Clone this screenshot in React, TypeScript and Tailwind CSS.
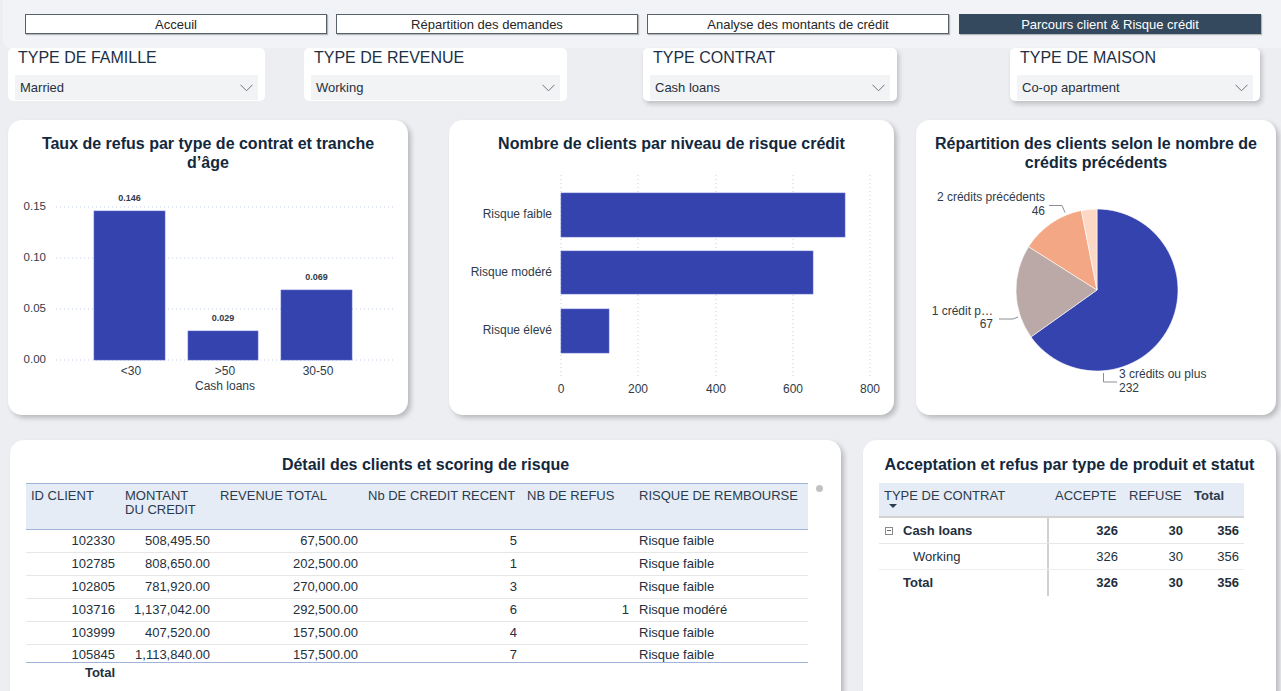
import React from "react";

const navItems = [
  { label: "Acceuil", active: false },
  { label: "Répartition des demandes", active: false },
  { label: "Analyse des montants de crédit", active: false },
  { label: "Parcours client & Risque crédit", active: true },
];

function Chevron() {
  return (
    <svg width="13" height="8" viewBox="0 0 13 8" className="shrink-0">
      <path d="M0.5 0.8 L6.5 6.8 L12.5 0.8" fill="none" stroke="#6b7280" strokeWidth="1" />
    </svg>
  );
}

function Slicer({ title, value, className }: { title: string; value: string; className: string }) {
  return (
    <div className={`bg-white rounded-[5px] px-[7px] flex flex-col h-[53px] ${className}`}>
      <div className="text-[16px] leading-[19px] pl-[3px] text-[#1d3045] whitespace-nowrap">{title}</div>
      <div className="mt-[8px] h-[25px] bg-[#f2f3f5] flex items-center justify-between pl-[5px] pr-[5px] pt-[1px]">
        <span className="text-[13px] text-[#27313c]">{value}</span>
        <Chevron />
      </div>
    </div>
  );
}

const cardCls = "bg-white rounded-[14px] shadow-[3px_3px_5px_rgba(0,0,0,0.22)] shrink-0";
const titleCls = "h-[51px] pt-[14px] text-center text-[16px] font-bold leading-[19px] text-[#13283c]";
const BLUE = "#3543ae";
const GRID = "#c3d1e8";

function RefusChart() {
  const ys = [
    { v: "0.15", y: 207 },
    { v: "0.10", y: 258 },
    { v: "0.05", y: 309 },
    { v: "0.00", y: 360 },
  ];
  const bars = [
    { x: 94, w: 71, top: 211, label: "0.146", cat: "<30", cx: 131 },
    { x: 188, w: 70, top: 331, label: "0.029", cat: ">50", cx: 225 },
    { x: 281, w: 71, top: 290, label: "0.069", cat: "30-50", cx: 318 },
  ];
  return (
    <svg width="400" height="244" className="block overflow-visible">
      <g transform="translate(-8 -171)">
        {ys.map((t) => (
          <g key={t.v}>
            <line x1="56" x2="395" y1={t.y} y2={t.y} stroke={GRID} strokeDasharray="1 3" />
            <text x="46" y={t.y} textAnchor="end" dominantBaseline="middle" fontSize="11.5" fill="#2f3b48">
              {t.v}
            </text>
          </g>
        ))}
        {bars.map((b) => (
          <g key={b.cat}>
            <rect x={b.x} y={b.top} width={b.w} height={360 - b.top} fill={BLUE} stroke="#5b68c8" strokeWidth="0.6" />
            <text x={b.x + b.w / 2} y={b.top - 12} textAnchor="middle" dominantBaseline="middle" fontSize="9" fontWeight="bold" fill="#2f3b48">
              {b.label}
            </text>
            <text x={b.cx} y="372" textAnchor="middle" dominantBaseline="middle" fontSize="12" fill="#2f3b48">
              {b.cat}
            </text>
          </g>
        ))}
        <text x="225" y="387" textAnchor="middle" dominantBaseline="middle" fontSize="12" fill="#2f3b48">
          Cash loans
        </text>
      </g>
    </svg>
  );
}

function RisqueChart() {
  const ticks = [
    { v: "0", x: 561 },
    { v: "200", x: 638 },
    { v: "400", x: 716 },
    { v: "600", x: 793 },
    { v: "800", x: 870 },
  ];
  const bars = [
    { label: "Risque faible", y: 193, h: 44, w: 284 },
    { label: "Risque modéré", y: 251, h: 43, w: 252 },
    { label: "Risque élevé", y: 309, h: 44, w: 48 },
  ];
  return (
    <svg width="445" height="244" className="block overflow-visible">
      <g transform="translate(-449 -171)">
        {ticks.map((t) => (
          <g key={t.v}>
            <line x1={t.x} x2={t.x} y1="175" y2="378" stroke={GRID} strokeDasharray="1 3" />
            <text x={t.x} y="390" textAnchor="middle" dominantBaseline="middle" fontSize="12" fill="#2f3b48">
              {t.v}
            </text>
          </g>
        ))}
        {bars.map((b) => (
          <g key={b.label}>
            <rect x="561" y={b.y} width={b.w} height={b.h} fill={BLUE} stroke="#5b68c8" strokeWidth="0.6" />
            <text x="552" y={b.y + b.h / 2} textAnchor="end" dominantBaseline="middle" fontSize="12" fill="#2f3b48">
              {b.label}
            </text>
          </g>
        ))}
      </g>
    </svg>
  );
}

function PieChart() {
  const cx = 1097;
  const cy = 290;
  const r = 81;
  const data = [
    { v: 232, c: "#3543ae" },
    { v: 67, c: "#baa9a6" },
    { v: 46, c: "#f3a784" },
    { v: 11, c: "#fdd8c5" },
  ];
  const total = data.reduce((s, d) => s + d.v, 0);
  const pt = (a: number) => [cx + r * Math.sin((a * Math.PI) / 180), cy - r * Math.cos((a * Math.PI) / 180)];
  let acc = 0;
  const slices = data.map((d) => {
    const a0 = (acc / total) * 360;
    acc += d.v;
    const a1 = (acc / total) * 360;
    const [x0, y0] = pt(a0);
    const [x1, y1] = pt(a1);
    const large = a1 - a0 > 180 ? 1 : 0;
    return { d: `M${cx},${cy} L${x0},${y0} A${r},${r} 0 ${large} 1 ${x1},${y1} Z`, c: d.c };
  });
  return (
    <svg width="360" height="244" className="block overflow-visible">
      <g transform="translate(-916 -171)">
        {slices.map((s, i) => (
          <path key={i} d={s.d} fill={s.c} stroke="#ffffff" strokeWidth="0.6" />
        ))}
        <polyline points="1049,205.5 1062,205.5 1065,212.5" fill="none" stroke="#8a8f96" strokeWidth="1" />
        <polyline points="999,319 1013,319 1018,317" fill="none" stroke="#8a8f96" strokeWidth="1" />
        <polyline points="1103.5,373 1103.5,382 1117,382" fill="none" stroke="#8a8f96" strokeWidth="1" />
        <g fontSize="12" fill="#2f3b48">
          <text x="1045" y="198" textAnchor="end" dominantBaseline="middle">2 crédits précédents</text>
          <text x="1045" y="212" textAnchor="end" dominantBaseline="middle">46</text>
          <text x="993" y="312" textAnchor="end" dominantBaseline="middle">1 crédit p…</text>
          <text x="993" y="325" textAnchor="end" dominantBaseline="middle">67</text>
          <text x="1119" y="375" dominantBaseline="middle">3 crédits ou plus</text>
          <text x="1119" y="388.5" dominantBaseline="middle">232</text>
        </g>
      </g>
    </svg>
  );
}

const detailRows = [
  ["102330", "508,495.50", "67,500.00", "5", "", "Risque faible"],
  ["102785", "808,650.00", "202,500.00", "1", "", "Risque faible"],
  ["102805", "781,920.00", "270,000.00", "3", "", "Risque faible"],
  ["103716", "1,137,042.00", "292,500.00", "6", "1", "Risque modéré"],
  ["103999", "407,520.00", "157,500.00", "4", "", "Risque faible"],
  ["105845", "1,113,840.00", "157,500.00", "7", "", "Risque faible"],
];

const gridCols = "grid grid-cols-[94px_95px_148px_159px_112px_174px]";

function DetailTable() {
  return (
    <div className="w-[782px] text-[13px] text-[#222f3d]">
      <div className={`${gridCols} h-[47px] bg-[#e5ecf6] border-y border-[#9fb4d6] pt-[5px] leading-[14px] text-[#2b3b4d]`}>
        <div className="pl-[5px]">ID CLIENT</div>
        <div className="pl-[5px]">
          MONTANT
          <br />
          DU CREDIT
        </div>
        <div className="pl-[5px]">REVENUE TOTAL</div>
        <div className="pl-[5px] whitespace-nowrap">Nb DE CREDIT RECENT</div>
        <div className="pl-[5px]">NB DE REFUS</div>
        <div className="pl-[5px] whitespace-nowrap">RISQUE DE REMBOURSE</div>
      </div>
      <div className="h-[133px] overflow-hidden border-b border-[#9fb4d6]">
        {detailRows.map((r, i) => (
          <div
            key={r[0]}
            className={`${gridCols} items-center ${i < 5 ? "h-[23px] border-b border-[#e6e6e6]" : "h-[18px]"}`}
          >
            <div className="text-right pr-[5px]">{r[0]}</div>
            <div className="text-right pr-[5px]">{r[1]}</div>
            <div className="text-right pr-[5px]">{r[2]}</div>
            <div className="text-right pr-[5px]">{r[3]}</div>
            <div className="text-right pr-[5px]">{r[4]}</div>
            <div className="pl-[5px]">{r[5]}</div>
          </div>
        ))}
      </div>
      <div className={`${gridCols} h-[20px] items-center`}>
        <div className="text-right pr-[5px] font-bold">Total</div>
      </div>
    </div>
  );
}

const mCols = "grid grid-cols-[170px_74px_65px_56px]";

function MinusBox() {
  return (
    <span className="w-[8px] h-[8px] border border-[#8a8a8a] flex items-center justify-center shrink-0">
      <span className="w-[4px] h-px bg-[#6a6a6a]" />
    </span>
  );
}

function Matrix() {
  const vals = ["326", "30", "356"];
  return (
    <div className="w-[365px] text-[13px] text-[#222f3d]">
      <div className={`${mCols} h-[35px] bg-[#e5ecf6] border-b-2 border-[#d2d2d2] pt-[6px] leading-[14px] text-[#2b3b4d]`}>
        <div className="pl-[5px]">
          <div>TYPE DE CONTRAT</div>
          <div className="ml-[5px] mt-[1px] w-0 h-0 border-x-[4px] border-x-transparent border-t-[4px] border-t-[#2b3b4d]" />
        </div>
        <div className="pl-[6px]">ACCEPTE</div>
        <div className="pl-[6px]">REFUSE</div>
        <div className="pl-[6px] font-bold">Total</div>
      </div>
      <div className={`${mCols} h-[26px] items-center border-b border-[#e6e6e6] font-bold`}>
        <div className="h-full flex items-center pl-[6px] border-r-2 border-[#d0d0d0]">
          <MinusBox />
          <span className="ml-[10px]">Cash loans</span>
        </div>
        {vals.map((v, i) => (
          <div key={i} className="text-right pr-[5px]">{v}</div>
        ))}
      </div>
      <div className={`${mCols} h-[26px] items-center border-b border-[#eeeeee]`}>
        <div className="h-full flex items-center pl-[34px] border-r-2 border-[#d0d0d0]">Working</div>
        {vals.map((v, i) => (
          <div key={i} className="text-right pr-[5px]">{v}</div>
        ))}
      </div>
      <div className={`${mCols} h-[26px] items-center font-bold`}>
        <div className="h-full flex items-center pl-[24px] border-r-2 border-[#d0d0d0]">Total</div>
        {vals.map((v, i) => (
          <div key={i} className="text-right pr-[5px]">{v}</div>
        ))}
      </div>
    </div>
  );
}

export default function App() {
  return (
    <div className="w-[1281px] h-[691px] overflow-hidden bg-[#eceef2] font-['Liberation_Sans',Arial,sans-serif] text-[#1e2f40]">
      {/* Navigation band */}
      <div className="h-[48px] ml-[3px] bg-[#f1f3f6] rounded-bl-[8px] flex items-start pt-[14px] pl-[22px] gap-[9px]">
        {navItems.map((n) => (
          <div
            key={n.label}
            className={`w-[302px] h-[20px] flex items-center justify-center text-[13px] leading-none border shadow-[1px_1px_1px_rgba(0,0,0,0.25)] ${
              n.active ? "ml-[1px] bg-[#34495e] border-[#34495e] text-white" : "bg-white border-[#56616c] text-[#262626]"
            }`}
          >
            {n.label}
          </div>
        ))}
      </div>

      {/* Slicers */}
      <div className="flex">
        <Slicer title="TYPE DE FAMILLE" value="Married" className="ml-[8px] w-[257px]" />
        <Slicer title="TYPE DE REVENUE" value="Working" className="ml-[39px] w-[263px]" />
        <Slicer title="TYPE CONTRAT" value="Cash loans" className="ml-[76px] w-[254px] shadow-[2px_3px_5px_rgba(0,0,0,0.2)]" />
        <Slicer title="TYPE DE MAISON" value="Co-op apartment" className="ml-[113px] w-[250px] shadow-[2px_3px_5px_rgba(0,0,0,0.2)]" />
      </div>

      {/* Row 1 charts */}
      <div className="flex mt-[19px]">
        <div className={`${cardCls} ml-[8px] w-[400px] h-[295px]`}>
          <div className={titleCls}>
            Taux de refus par type de contrat et tranche
            <br />
            d’âge
          </div>
          <RefusChart />
        </div>
        <div className={`${cardCls} ml-[41px] w-[445px] h-[295px]`}>
          <div className={titleCls}>Nombre de clients par niveau de risque crédit</div>
          <RisqueChart />
        </div>
        <div className={`${cardCls} ml-[22px] w-[360px] h-[295px]`}>
          <div className={titleCls}>
            Répartition des clients selon le nombre de
            <br />
            crédits précédents
          </div>
          <PieChart />
        </div>
      </div>

      {/* Row 2 tables */}
      <div className="flex mt-[25px]">
        <div className={`${cardCls} ml-[10px] w-[831px] h-[270px]`}>
          <div className="h-[43px] pt-[15px] text-center text-[16px] font-bold leading-[19px] text-[#13283c]">
            Détail des clients et scoring de risque
          </div>
          <div className="flex pl-[16px]">
            <DetailTable />
            <div className="ml-[8px] pt-[2px]">
              <div className="w-[7px] h-[7px] rounded-full bg-[#c2c2c2]" />
            </div>
          </div>
        </div>
        <div className={`${cardCls} ml-[22px] w-[413px] h-[270px]`}>
          <div className="h-[43px] pt-[15px] text-center text-[16px] font-bold leading-[19px] text-[#13283c] whitespace-nowrap">
            Acceptation et refus par type de produit et statut
          </div>
          <div className="pl-[16px]">
            <Matrix />
          </div>
        </div>
      </div>
    </div>
  );
}
